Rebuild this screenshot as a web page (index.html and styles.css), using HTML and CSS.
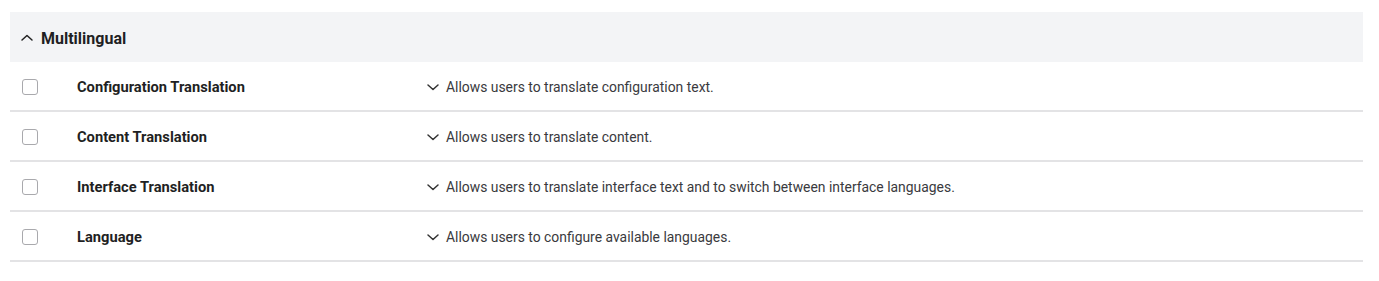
FILE: index.html
```
<!DOCTYPE html>
<html lang="en">
<head>
    <meta charset="UTF-8">
    <meta name="viewport" content="width=device-width, initial-scale=1.0">
    <title>Extend - Multilingual</title>
    <link rel="stylesheet" href="styles.css">
</head>
<body>
    <div class="module-group">
        <div class="group-header">
            <svg class="chevron-up" width="14" height="14" viewBox="0 0 14 14"><path d="M2 9 L7 4.5 L12 9" fill="none" stroke="#222" stroke-width="1.5" stroke-linecap="round" stroke-linejoin="round"/></svg>
            <span>Multilingual</span>
        </div>
        <div class="module-row">
            <div class="cell-check"><span class="checkbox"></span></div>
            <div class="cell-name">Configuration Translation</div>
            <div class="cell-desc">
                <svg class="chevron" width="14" height="14" viewBox="0 0 14 14"><path d="M2 5 L7 9.5 L12 5" fill="none" stroke="#333" stroke-width="1.5" stroke-linecap="round" stroke-linejoin="round"/></svg>
                Allows users to translate configuration text.
            </div>
        </div>
        <div class="module-row">
            <div class="cell-check"><span class="checkbox"></span></div>
            <div class="cell-name">Content Translation</div>
            <div class="cell-desc">
                <svg class="chevron" width="14" height="14" viewBox="0 0 14 14"><path d="M2 5 L7 9.5 L12 5" fill="none" stroke="#333" stroke-width="1.5" stroke-linecap="round" stroke-linejoin="round"/></svg>
                Allows users to translate content.
            </div>
        </div>
        <div class="module-row">
            <div class="cell-check"><span class="checkbox"></span></div>
            <div class="cell-name">Interface Translation</div>
            <div class="cell-desc">
                <svg class="chevron" width="14" height="14" viewBox="0 0 14 14"><path d="M2 5 L7 9.5 L12 5" fill="none" stroke="#333" stroke-width="1.5" stroke-linecap="round" stroke-linejoin="round"/></svg>
                Allows users to translate interface text and to switch between interface languages.
            </div>
        </div>
        <div class="module-row">
            <div class="cell-check"><span class="checkbox"></span></div>
            <div class="cell-name">Language</div>
            <div class="cell-desc">
                <svg class="chevron" width="14" height="14" viewBox="0 0 14 14"><path d="M2 5 L7 9.5 L12 5" fill="none" stroke="#333" stroke-width="1.5" stroke-linecap="round" stroke-linejoin="round"/></svg>
                Allows users to configure available languages.
            </div>
        </div>
    </div>
</body>
</html>
```

FILE: styles.css
```
* {
    margin: 0;
    padding: 0;
    box-sizing: border-box;
}
body, html {
    height: 100%;
    font-family: Roboto, "Noto Sans", Arial, sans-serif;
    background-color: #fff;
    color: #222;
}
body {
    padding: 12px 16px 0 10px;
}
.group-header {
    display: flex;
    align-items: center;
    gap: 7px;
    height: 50px;
    padding: 2px 0 0 10px;
    background-color: #f3f4f6;
    font-size: 16px;
    font-weight: 700;
    color: #1f1f23;
}
.module-row {
    display: grid;
    grid-template-columns: 67px 349px 1fr;
    align-items: center;
    height: 50px;
    padding-top: 2px;
    border-bottom: 2px solid #e3e3e5;
    font-size: 13.9px;
}
.cell-check {
    padding-left: 12px;
    display: flex;
}
.checkbox {
    width: 16px;
    height: 16px;
    border: 1px solid #a9a9ad;
    border-radius: 3px;
    background: #fff;
}
.cell-name {
    font-size: 14.7px;
    font-weight: 700;
    color: #1f1f23;
}
.cell-desc {
    display: flex;
    align-items: center;
    gap: 6px;
    color: #3a3a3e;
}
```
